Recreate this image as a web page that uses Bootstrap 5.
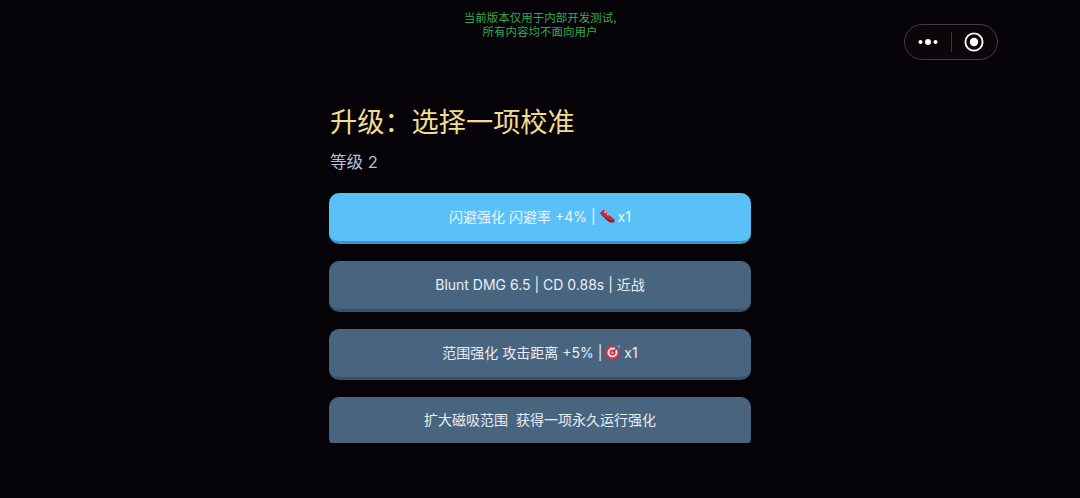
<!doctype html>
<html lang="zh">
<head>
<meta charset="utf-8">
<title>升级</title>
<link href="https://cdn.jsdelivr.net/npm/bootstrap@5.3.0/dist/css/bootstrap.min.css" rel="stylesheet">
<style>
html,body{height:498px;overflow:hidden;background:#060308;font-family:Inter,"Noto Sans CJK SC","Noto Sans",sans-serif}
.stage{height:498px;position:relative}
.dev-note{position:absolute;top:10px;left:0;right:0;text-align:center;color:#3aa84c;font-size:11.5px;line-height:14px;font-family:"Noto Sans CJK SC",sans-serif}
.capsule{position:absolute;left:904px;top:24px;width:94px;height:36px;border:1px solid #453e43;border-radius:18px;background:#0a0609}
.capsule-line{width:1px;height:20px;background:#3a3539}
.capsule-side{width:46px}
.panel{width:422px;margin-left:329px;padding-top:100px;height:443px;overflow:hidden}
.panel-title{font-size:27.2px;line-height:40px;color:#f4dc8f;font-weight:400;margin:0;padding-left:1px;font-family:"Noto Sans CJK SC",sans-serif}
.panel-level{font-size:16.5px;line-height:24px;color:#b4c0dc;margin-top:10px;margin-bottom:19px;padding-left:1px}
.choice{display:flex;align-items:center;justify-content:center;gap:3px;width:100%;height:51px;flex:none;border:0;border-bottom:3px solid #38506a;border-radius:10px;background:#48647f;color:#e8eef5;font-size:14px;padding:0 0 2px}
.choice-on{background:#5ac0f8;border-bottom-color:#3f93c4;color:#eaf6fd}
.choice-wide{word-spacing:4px;padding-bottom:3px}
.stack{gap:17px}
.glyph{width:16px;height:16px;flex:none}
</style>
</head>
<body>
<div class="stage">
  <div class="dev-note">当前版本仅用于内部开发测试,<br>所有内容均不面向用户</div>
  <div class="capsule d-flex align-items-center">
    <div class="capsule-side d-flex justify-content-center">
      <svg width="20" height="8" viewBox="0 0 20 8"><circle cx="2.5" cy="4" r="2" fill="#fff"/><circle cx="10" cy="4" r="3" fill="#fff"/><circle cx="17.5" cy="4" r="2" fill="#fff"/></svg>
    </div>
    <div class="capsule-line"></div>
    <div class="capsule-side d-flex justify-content-center">
      <svg width="20" height="20" viewBox="0 0 20 20"><circle cx="10" cy="10" r="8.6" fill="none" stroke="#fff" stroke-width="1.9"/><circle cx="10" cy="10" r="4.2" fill="#fff"/></svg>
    </div>
  </div>
  <div class="panel">
    <h1 class="panel-title">升级：选择一项校准</h1>
    <div class="panel-level">等级 2</div>
    <div class="d-flex flex-column stack">
      <button class="choice choice-on" type="button"><span>闪避强化 闪避率 +4% |</span>
        <svg class="glyph" viewBox="0 0 16 16"><path d="M.8 5.2 4.6 1.6 7.2 3.8 9.6 7 13 9.2 15.6 11.6 15 14 11.6 14.4 9 13Z" fill="#c8283e"/><path d="M1 5.6 9 13.2 11.6 14.6 15 14.2 15.4 12.6 11.6 12.4 8.6 10.8Z" fill="#85202f"/><path d="M5 3.4 6.4 3 7.4 4.8 6 5.4ZM7.6 6 8.8 5.6 9.6 7.2 8.4 7.6Z" fill="#f0c8cc"/></svg>
        <span>x1</span></button>
      <button class="choice" type="button">Blunt DMG 6.5 | CD 0.88s | 近战</button>
      <button class="choice" type="button"><span>范围强化 攻击距离 +5% |</span>
        <svg class="glyph" viewBox="0 0 16 16"><circle cx="7.5" cy="8.5" r="7.2" fill="#d8324a"/><circle cx="7.5" cy="8.5" r="5" fill="#f4dfe0"/><circle cx="7.5" cy="8.5" r="3" fill="#d8324a"/><circle cx="7.5" cy="8.5" r="1.2" fill="#f4dfe0"/><path d="M7.5 8.5 13 3" stroke="#46586c" stroke-width="1.2"/><path d="M11.6 2.2 14 .4 14.4 1.8 15.9 2.2 13.8 4.4Z" fill="#4fa3e0"/></svg>
        <span>x1</span></button>
      <button class="choice choice-wide" type="button">扩大磁吸范围 获得一项永久运行强化</button>
    </div>
  </div>
</div>
<script src="https://cdn.jsdelivr.net/npm/bootstrap@5.3.0/dist/js/bootstrap.bundle.min.js"></script>
</body>
</html>
